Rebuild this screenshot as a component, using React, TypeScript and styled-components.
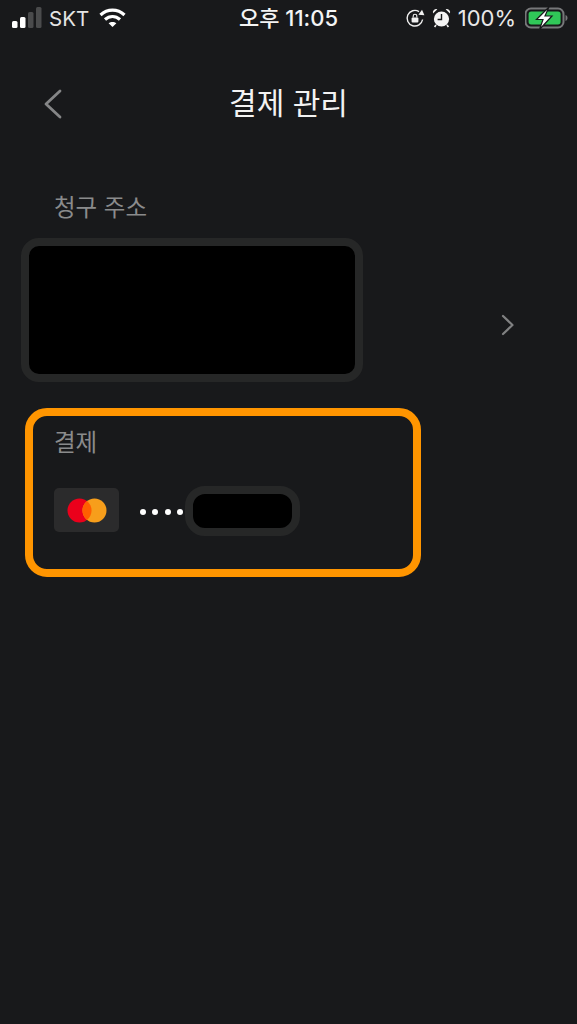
import React from "react";
import styled, { createGlobalStyle } from "styled-components";

const GlobalStyle = createGlobalStyle`
  html, body {
    margin: 0;
    padding: 0;
    background-color: #18191b;
  }
  * {
    box-sizing: border-box;
  }
`;

const Screen = styled.div`
  width: 577px;
  height: 1024px;
  overflow: hidden;
  background-color: #18191b;
  font-family: Inter, "Noto Sans CJK KR", sans-serif;
`;

const StatusBar = styled.div`
  display: grid;
  grid-template-columns: 1fr auto 1fr;
  align-items: center;
  height: 36px;
  padding: 0 8px 0 12px;
  color: #fff;
`;

const StatusLeft = styled.div`
  display: flex;
  align-items: center;
`;

const StatusRight = styled.div`
  display: flex;
  align-items: center;
  justify-content: flex-end;
  gap: 7px;
`;

const Carrier = styled.span`
  margin: 0 10px 0 5px;
  font-size: 20.5px;
  color: #e4e4e4;
`;

const Clock = styled.span`
  margin: 0 4px 4px 0;
  font-size: 22px;
  font-weight: 500;
  color: #f4f4f4;
`;

const Percent = styled.span`
  margin-right: 2px;
  font-size: 22px;
  color: #e8e8e8;
`;

const NavBar = styled.div`
  display: grid;
  grid-template-columns: 1fr auto 1fr;
  align-items: center;
  height: 56px;
  margin-top: 37px;
  padding: 0 42px;
`;

const BackButton = styled.div`
  display: flex;
  align-items: center;
  width: 28px;
  height: 40px;
  margin-top: 5px;
`;

const Title = styled.h1`
  margin: 0;
  font-size: 30px;
  font-weight: 400;
  color: #f2f2f2;
`;

const Section = styled.div`
  margin-top: 62px;
`;

const Label = styled.div`
  font-size: 23.5px;
  line-height: 34px;
  font-weight: 400;
  color: #8a8b8c;
`;

const AddressLabel = styled(Label)`
  padding-left: 54px;
`;

const AddressRow = styled.div`
  display: flex;
  align-items: center;
  justify-content: space-between;
  margin-top: 13px;
  padding: 0 62px 0 21px;
`;

const ChevronSlot = styled.div`
  display: flex;
  margin-top: 30px;
`;

const Redacted = styled.div<{ $width: number; $height: number; $radius: number; $offset?: number }>`
  width: ${(p) => p.$width}px;
  height: ${(p) => p.$height}px;
  margin-top: ${(p) => p.$offset ?? 0}px;
  border: 8px solid #262727;
  border-radius: ${(p) => p.$radius}px;
  background-color: #000;
`;

const PaymentBox = styled.div`
  width: 396px;
  height: 169px;
  margin: 26px 0 0 25px;
  padding: 10px 0 0 21px;
  border: 8.5px solid #ff9500;
  border-radius: 22px;
`;

const PaymentRow = styled.div`
  display: flex;
  align-items: center;
  margin-top: 24px;
`;

const CardChip = styled.div`
  display: flex;
  align-items: center;
  justify-content: center;
  width: 65px;
  height: 44px;
  border-radius: 5px;
  background-color: #2b2b2c;
`;

const Dots = styled.div`
  display: flex;
  gap: 6.4px;
  margin: 3px 2px 0 21px;
`;

const Dot = styled.span`
  width: 6px;
  height: 6px;
  border-radius: 50%;
  background-color: #fff;
`;

const SignalIcon = () => (
  <svg width="32" height="22" viewBox="0 0 32 22">
    <rect x="0" y="14" width="5.5" height="7" rx="1.5" fill="#fff" />
    <rect x="8" y="10" width="5.5" height="11" rx="1.5" fill="#fff" />
    <rect x="16" y="5" width="5.5" height="16" rx="1.5" fill="#4a4b4c" />
    <rect x="24" y="0" width="5.5" height="21" rx="1.5" fill="#4a4b4c" />
  </svg>
);

const WifiIcon = () => (
  <svg width="27" height="20" viewBox="0 0 27 20" fill="none" stroke="#fff" strokeWidth="3.2">
    <path d="M1.5 7C8.5 0.6 18.5 0.6 25.5 7" />
    <path d="M6 11.5C10.5 7.5 16.5 7.5 21 11.5" />
    <path d="M13.5 19L9.6 15.3C11.8 13.4 15.2 13.4 17.4 15.3Z" fill="#fff" stroke="none" />
  </svg>
);

const RotationLockIcon = () => (
  <svg width="20" height="20" viewBox="0 0 20 20" fill="none">
    <path d="M17.6 11.5A7.8 7.8 0 1 1 14 3.6" stroke="#f0f0f0" strokeWidth="1.4" />
    <path d="M13.4 6.8L19.4 7.2L17 1.8Z" fill="#f0f0f0" />
    <rect x="6.6" y="9.4" width="6.8" height="5" rx="1" fill="#f0f0f0" />
    <path d="M8.2 9.4V8A1.8 1.8 0 0 1 11.8 8V9.4" stroke="#f0f0f0" strokeWidth="1.1" />
  </svg>
);

const AlarmIcon = () => (
  <svg width="19" height="20" viewBox="0 0 19 20" fill="none">
    <circle cx="9.5" cy="11" r="7.6" fill="#f4f4f4" />
    <path d="M9.5 6V11.5H5.6" stroke="#18191b" strokeWidth="1.4" />
    <path d="M1 5.4A3.4 3.4 0 0 1 5.4 1.2Z" fill="#f4f4f4" />
    <path d="M18 5.4A3.4 3.4 0 0 0 13.6 1.2Z" fill="#f4f4f4" />
    <path d="M4 17L2.6 19M15 17L16.4 19" stroke="#f4f4f4" strokeWidth="1.6" />
  </svg>
);

const BatteryIcon = () => (
  <svg width="44" height="24" viewBox="0 0 44 24" fill="none">
    <rect x="0.5" y="2.5" width="38" height="19" rx="5.5" stroke="#77787a" strokeWidth="2" />
    <rect x="3.6" y="5.6" width="32" height="12.8" rx="2.6" fill="#30c758" />
    <path d="M40.5 9V15C41.9 14.6 42.5 13.4 42.5 12C42.5 10.6 41.9 9.4 40.5 9Z" fill="#77787a" />
    <path d="M24 1L11.5 13.5H18L14.5 23.5L27 10H20Z" fill="#fff" stroke="#18191b" strokeWidth="1.2" />
  </svg>
);

const BackIcon = () => (
  <svg width="20" height="32" viewBox="0 0 20 32" fill="none">
    <path d="M18 3L4 16L18 29" stroke="#858687" strokeWidth="2.8" strokeLinecap="round" strokeLinejoin="round" />
  </svg>
);

const ChevronIcon = () => (
  <svg width="14" height="22" viewBox="0 0 14 22" fill="none">
    <path d="M2 2L11.5 11L2 20" stroke="#808182" strokeWidth="2.2" strokeLinecap="round" strokeLinejoin="round" />
  </svg>
);

const MastercardIcon = () => (
  <svg width="40" height="25" viewBox="0 0 40 25">
    <circle cx="12.5" cy="12.5" r="12" fill="#eb001b" />
    <circle cx="27.5" cy="12.5" r="12" fill="#f79e1b" />
    <path d="M20 3.1A12 12 0 0 1 20 21.9A12 12 0 0 1 20 3.1Z" fill="#ff5f00" />
  </svg>
);

const App: React.FC = () => {
  return (
    <Screen>
      <GlobalStyle />
      <StatusBar>
        <StatusLeft>
          <SignalIcon />
          <Carrier>SKT</Carrier>
          <WifiIcon />
        </StatusLeft>
        <Clock>오후 11:05</Clock>
        <StatusRight>
          <RotationLockIcon />
          <AlarmIcon />
          <Percent>100%</Percent>
          <BatteryIcon />
        </StatusRight>
      </StatusBar>
      <NavBar>
        <BackButton>
          <BackIcon />
        </BackButton>
        <Title>결제 관리</Title>
      </NavBar>
      <Section>
        <AddressLabel>청구 주소</AddressLabel>
        <AddressRow>
          <Redacted $width={342} $height={144} $radius={18} />
          <ChevronSlot>
            <ChevronIcon />
          </ChevronSlot>
        </AddressRow>
      </Section>
      <PaymentBox>
        <Label>결제</Label>
        <PaymentRow>
          <CardChip>
            <MastercardIcon />
          </CardChip>
          <Dots>
            <Dot />
            <Dot />
            <Dot />
            <Dot />
          </Dots>
          <Redacted $width={115} $height={50} $radius={20} $offset={2} />
        </PaymentRow>
      </PaymentBox>
    </Screen>
  );
};

export default App;
